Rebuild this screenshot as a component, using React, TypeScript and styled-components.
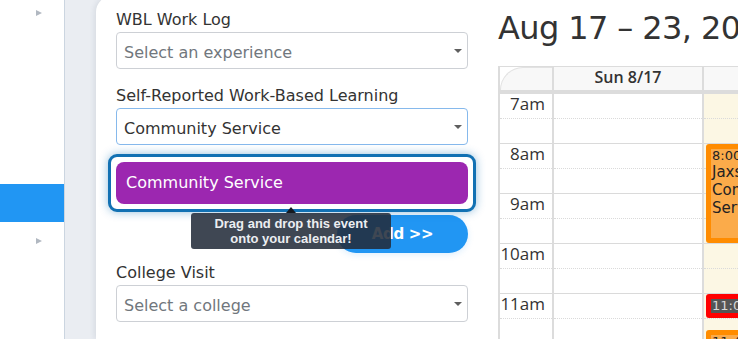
import React from 'react';
import styled, { createGlobalStyle } from 'styled-components';

const GlobalStyle = createGlobalStyle`
  html, body { margin: 0; padding: 0; overflow: hidden; width: 738px; height: 339px; background: #eaedf2; }
  body { font-family: "DejaVu Sans", sans-serif; color: #333; }
  *, *::before, *::after { box-sizing: border-box; }
`;

const Shell = styled.div`
  display: flex;
  width: 738px;
  height: 339px;
  overflow: hidden;
  background: #eaedf2;
`;

const Sidebar = styled.nav`
  flex: 0 0 65px;
  background: #fff;
  border-right: 1px solid #cbd5e0;
  overflow: hidden;
`;

const SideList = styled.ul`
  list-style: none;
  margin: -6px 0 0;
  padding: 0;
  display: flex;
  flex-direction: column;
`;

const SideItem = styled.li<{ $active?: boolean }>`
  height: 38px;
  display: flex;
  align-items: center;
  justify-content: flex-end;
  padding-right: 22px;
  background: ${(p) => (p.$active ? '#2196f3' : 'transparent')};
`;

const Chevron = styled.span`
  width: 0;
  height: 0;
  border-left: 6px solid #b1b8c1;
  border-top: 3.5px solid transparent;
  border-bottom: 3.5px solid transparent;
`;

const Main = styled.main`
  flex: 1;
  padding-left: 31px;
  min-width: 0;
`;

const Panel = styled.section`
  display: flex;
  gap: 30px;
  height: calc(100% + 4px);
  margin-top: -4px;
  padding: 14px 0 0 20px;
  background: #fff;
  border-top-left-radius: 16px;
  box-shadow: -2px 0 5px rgba(60, 80, 110, 0.1);
  overflow: hidden;
`;

const Form = styled.div`
  flex: 0 0 352px;
  display: flex;
  flex-direction: column;
`;

const Field = styled.div<{ $gap?: number }>`
  display: flex;
  flex-direction: column;
  margin-top: ${(p) => p.$gap ?? 0}px;
`;

const Label = styled.label`
  font-size: 16px;
  line-height: 20px;
  color: #333;
  margin-bottom: 2px;
`;

const Select = styled.div<{ $focused?: boolean; $placeholder?: boolean }>`
  height: 37px;
  display: flex;
  align-items: center;
  justify-content: space-between;
  padding: 4px 5px 0 7px;
  border: 1px solid ${(p) => (p.$focused ? '#86b9ec' : '#cdd0d5')};
  border-radius: 4px;
  font-size: 16px;
  line-height: 20px;
  color: ${(p) => (p.$placeholder ? '#71777d' : '#333')};
  background: #fff;
`;

const Caret = styled.span`
  width: 0;
  height: 0;
  margin-bottom: 4px;
  border-left: 4px solid transparent;
  border-right: 4px solid transparent;
  border-top: 4px solid #5f5f5f;
`;

const EventCard = styled.div`
  position: relative;
  margin: 9px -8px 0;
  padding: 5px;
  border: 3px solid #1271b3;
  border-radius: 9px;
  box-shadow: 0 0 10px rgba(18, 113, 179, 0.45);
  background: #fff;
`;

const DragEvent = styled.div`
  height: 42px;
  display: flex;
  align-items: center;
  padding-left: 10px;
  border-radius: 8px;
  background: #9c27b0;
  color: #fff;
  font-size: 16px;
  line-height: 20px;
  cursor: grab;
`;

const Tooltip = styled.div`
  position: absolute;
  z-index: 5;
  top: calc(100% + 4px);
  left: 80px;
  width: 200px;
  padding: 3px 8px;
  border-radius: 3px;
  background: rgba(35, 44, 58, 0.87);
  color: #eceef1;
  font-family: "Liberation Sans", Arial, sans-serif;
  font-weight: bold;
  font-size: 13px;
  line-height: 15px;
  text-align: center;

  &::before {
    content: '';
    position: absolute;
    top: -6px;
    left: 50%;
    transform: translateX(-50%);
    border-left: 5px solid transparent;
    border-right: 5px solid transparent;
    border-bottom: 6px solid #161a20;
  }
`;

const ButtonRow = styled.div`
  display: flex;
  justify-content: flex-end;
  margin-top: 3px;
`;

const AddButton = styled.button`
  width: 131px;
  height: 38px;
  border: none;
  border-radius: 19px;
  background: #2196f3;
  color: #fff;
  font-family: "DejaVu Sans", sans-serif;
  font-weight: bold;
  font-size: 15px;
  letter-spacing: -0.3px;
  box-shadow: 0 2px 6px rgba(33, 150, 243, 0.15);
`;

const Calendar = styled.div`
  flex: 0 0 auto;
  display: flex;
  flex-direction: column;
`;

const Title = styled.h2`
  margin: 0 0 20px;
  font-size: 32px;
  line-height: 36px;
  font-weight: normal;
  letter-spacing: -0.6px;
  color: #333;
  white-space: nowrap;
`;

const COLS = '54px repeat(7, 150px)';

const HeaderRow = styled.div`
  display: grid;
  grid-template-columns: ${COLS};
  border-top: 1px solid #dcdcdc;
  border-bottom: 4px solid #dcdcdc;
`;

const HeaderCell = styled.div`
  height: 23px;
  border-left: 2px solid #dcdcdc;
  background: #f8f8f8;
  text-align: center;
  font-family: "Open Sans", sans-serif;
  font-weight: 600;
  font-size: 16px;
  line-height: 20px;
  color: #333;
`;

const CornerCell = styled.div`
  height: 23px;
  border-left: 2px solid #dcdcdc;
  background: #fff;
  position: relative;

  &::before {
    content: '';
    position: absolute;
    inset: 0;
    border-top-left-radius: 24px;
    border-top: 1px solid #e2e2e2;
    border-left: 1px solid #e2e2e2;
    background: #f8f8f8;
  }
`;

const Body = styled.div`
  display: grid;
  grid-template-columns: ${COLS};
`;

const Column = styled.div<{ $today?: boolean }>`
  position: relative;
  border-left: 2px solid #dcdcdc;
  background: ${(p) => (p.$today ? '#fcf7e4' : '#fff')};
`;

const Slot = styled.div<{ $minor?: boolean }>`
  height: 25px;
  border-bottom: 1px ${(p) => (p.$minor ? 'dotted' : 'solid')} #dadada;
`;

const TimeLabel = styled.div`
  padding-right: 7px;
  text-align: right;
  font-family: "Open Sans", sans-serif;
  font-size: 17px;
  line-height: 20px;
  color: #333;
`;

const CalEvent = styled.div<{ $border: string; $fill: string }>`
  position: absolute;
  left: 2px;
  right: 3px;
  padding: 0 1px;
  border: 5px solid ${(p) => p.$border};
  border-radius: 3px;
  background: ${(p) => p.$fill};
  overflow: hidden;
`;

const EventTime = styled.div<{ $dark?: boolean }>`
  font-size: 13px;
  line-height: 14px;
  color: ${(p) => (p.$dark ? '#d8d8d8' : '#222')};
  background: ${(p) => (p.$dark ? '#555' : 'transparent')};
  white-space: nowrap;
`;

const EventTitle = styled.div`
  font-size: 15px;
  line-height: 18px;
  color: #222;
`;

const hours = ['7am', '8am', '9am', '10am', '11am', '12pm'];
const days = ['Sun 8/17', 'Mon 8/18', 'Tue 8/19', 'Wed 8/20', 'Thu 8/21', 'Fri 8/22', 'Sat 8/23'];

function Slots() {
  return (
    <>
      {hours.map((h) => (
        <React.Fragment key={h}>
          <Slot $minor />
          <Slot />
        </React.Fragment>
      ))}
    </>
  );
}

export default function App() {
  return (
    <>
      <GlobalStyle />
      <Shell>
        <Sidebar>
          <SideList>
            <SideItem><Chevron /></SideItem>
            <SideItem />
            <SideItem />
            <SideItem />
            <SideItem />
            <SideItem $active />
            <SideItem><Chevron /></SideItem>
            <SideItem />
            <SideItem />
          </SideList>
        </Sidebar>
        <Main>
          <Panel>
            <Form>
              <Field>
                <Label>WBL Work Log</Label>
                <Select $placeholder>
                  <span>Select an experience</span>
                  <Caret />
                </Select>
              </Field>
              <Field $gap={17}>
                <Label>Self-Reported Work-Based Learning</Label>
                <Select $focused>
                  <span>Community Service</span>
                  <Caret />
                </Select>
              </Field>
              <EventCard>
                <DragEvent>Community Service</DragEvent>
                <Tooltip>
                  Drag and drop this event
                  <br />
                  onto your calendar!
                </Tooltip>
              </EventCard>
              <ButtonRow>
                <AddButton>Add &gt;&gt;</AddButton>
              </ButtonRow>
              <Field $gap={10}>
                <Label>College Visit</Label>
                <Select $placeholder>
                  <span>Select a college</span>
                  <Caret />
                </Select>
              </Field>
            </Form>
            <Calendar>
              <Title>Aug 17 – 23, 2025</Title>
              <HeaderRow>
                <CornerCell />
                {days.map((d) => (
                  <HeaderCell key={d}>{d}</HeaderCell>
                ))}
              </HeaderRow>
              <Body>
                <Column>
                  {hours.map((h) => (
                    <React.Fragment key={h}>
                      <Slot $minor>
                        <TimeLabel>{h}</TimeLabel>
                      </Slot>
                      <Slot />
                    </React.Fragment>
                  ))}
                </Column>
                {days.map((d, i) => (
                  <Column key={d} $today={i === 1}>
                    <Slots />
                    {i === 1 && (
                      <>
                        <CalEvent $border="#ff8c00" $fill="#fbab4a" style={{ top: 50, height: 99 }}>
                          <EventTime>8:00 - 10:00</EventTime>
                          <EventTitle>Jaxson Community Service</EventTitle>
                        </CalEvent>
                        <CalEvent $border="#ff0000" $fill="#555" style={{ top: 200, height: 24 }}>
                          <EventTime $dark>11:00 - 11:30</EventTime>
                        </CalEvent>
                        <CalEvent $border="#ff8c00" $fill="#fbab4a" style={{ top: 236, height: 60 }}>
                          <EventTime>11:45 - 12:45</EventTime>
                          <EventTitle>Jaxson Job Shadow</EventTitle>
                        </CalEvent>
                      </>
                    )}
                  </Column>
                ))}
              </Body>
            </Calendar>
          </Panel>
        </Main>
      </Shell>
    </>
  );
}
